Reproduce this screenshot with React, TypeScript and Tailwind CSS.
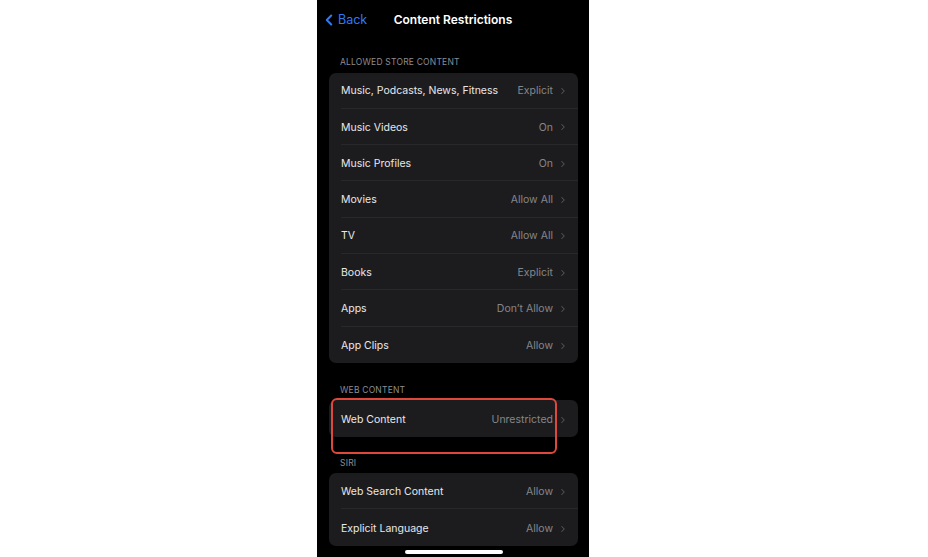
import { ChevronLeft, ChevronRight } from "lucide-react";

type Row = { label: string; value: string };

const storeRows: Row[] = [
  { label: "Music, Podcasts, News, Fitness", value: "Explicit" },
  { label: "Music Videos", value: "On" },
  { label: "Music Profiles", value: "On" },
  { label: "Movies", value: "Allow All" },
  { label: "TV", value: "Allow All" },
  { label: "Books", value: "Explicit" },
  { label: "Apps", value: "Don’t Allow" },
  { label: "App Clips", value: "Allow" },
];

const siriRows: Row[] = [
  { label: "Web Search Content", value: "Allow" },
  { label: "Explicit Language", value: "Allow" },
];

const SectionHeader = ({ title }: { title: string }) => (
  <div className="pl-[23px] text-[8.5px] tracking-[0.2px] text-[#8d8d92] leading-none">
    {title}
  </div>
);

const Card = ({ rows }: { rows: Row[] }) => (
  <div className="ml-[12px] mr-[11px] rounded-[7px] bg-[#1c1c1e]">
    {rows.map((row, i) => (
      <div key={row.label} className="flex h-[36.3px] items-center pl-[12px]">
        <div
          className={`flex h-full flex-1 items-center pr-[10px] pt-[2px] ${
            i < rows.length - 1 ? "border-b border-[#28282a]" : ""
          }`}
        >
          <span className="flex-1 text-[10.5px] text-[#e8e8ea]">{row.label}</span>
          <span className="text-[10.5px] text-[#86868b]">{row.value}</span>
          <ChevronRight className="ml-[5px] h-[10px] w-[10px] text-[#55555a]" strokeWidth={2.5} />
        </div>
      </div>
    ))}
  </div>
);

export default function App() {
  return (
    <div
      className="flex h-[557px] w-[928px] bg-white"
      style={{ fontFamily: "Inter, 'Noto Sans', sans-serif" }}
    >
      <div className="w-[317px]" />
      <div className="relative flex h-full w-[272px] flex-col overflow-hidden bg-black">
        {/* nav bar */}
        <div className="relative flex h-[40px] items-center justify-center">
          <div className="absolute left-[3px] top-[11px] flex items-center text-[#2f7bf5]">
            <ChevronLeft className="h-[18px] w-[18px]" strokeWidth={2.6} />
            <span className="text-[12.5px]">Back</span>
          </div>
          <span className="text-[12px] font-semibold text-white">Content Restrictions</span>
        </div>

        <div className="mt-[18px]">
          <SectionHeader title="ALLOWED STORE CONTENT" />
        </div>
        <div className="mt-[6px]">
          <Card rows={storeRows} />
        </div>

        <div className="mt-[23px]">
          <SectionHeader title="WEB CONTENT" />
        </div>
        <div className="relative mt-[6px]">
          <Card rows={[{ label: "Web Content", value: "Unrestricted" }]} />
          <div className="absolute left-[14px] top-[-2px] h-[56px] w-[226px] rounded-[6px] border-2 border-[#e0483c]" />
        </div>

        <div className="mt-[22px]">
          <SectionHeader title="SIRI" />
        </div>
        <div className="mt-[6px]">
          <Card rows={siriRows} />
        </div>

        <div className="absolute bottom-[3px] left-[88px] h-[4px] w-[98px] rounded-full bg-white" />
      </div>
    </div>
  );
}
